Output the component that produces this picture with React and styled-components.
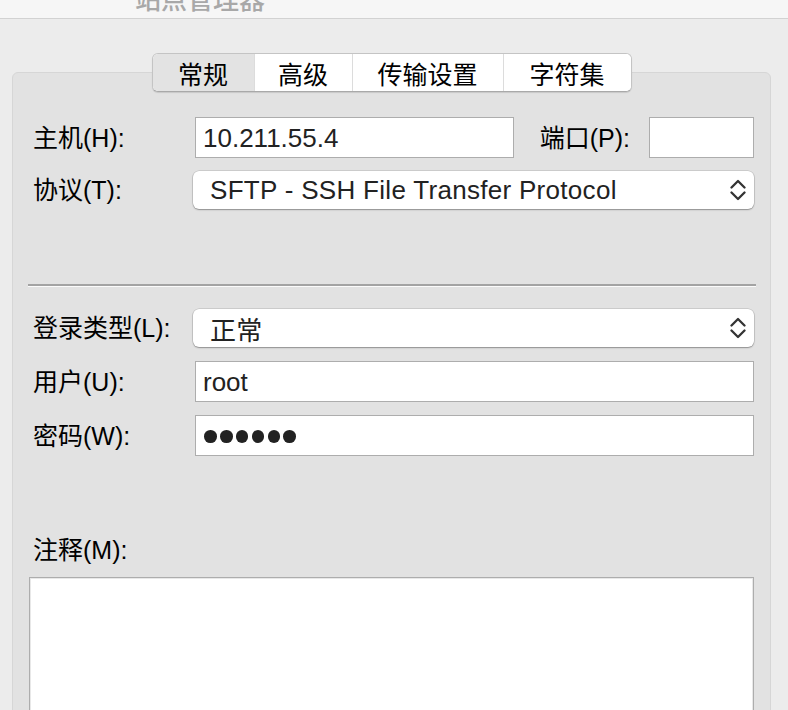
import React from "react";
import styled, { createGlobalStyle } from "styled-components";

const GlobalStyle = createGlobalStyle`
  html, body {
    margin: 0;
    padding: 0;
    background: #ececec;
  }
  body {
    font-family: "Liberation Sans", "Noto Sans CJK SC", sans-serif;
    -webkit-font-smoothing: antialiased;
  }
`;

const Window = styled.div`
  width: 788px;
  height: 710px;
  overflow: hidden;
  display: flex;
  flex-direction: column;
  background: #ececec;
`;

const TitleBar = styled.div`
  height: 18px;
  flex-shrink: 0;
  background: #f6f6f6;
  border-bottom: 1px solid #d2d2d2;
  overflow: hidden;
  padding-left: 135px;
`;

const Title = styled.div`
  margin-top: -15px;
  font-size: 26px;
  line-height: 26px;
  color: #a8a8a8;
  font-family: "Noto Sans CJK SC", sans-serif;
  font-weight: 500;
`;

const Body = styled.div`
  flex: 1;
  padding: 34px 17px 0 12px;
  display: flex;
  flex-direction: column;
`;

const TabRow = styled.div`
  display: flex;
  justify-content: center;
  margin-bottom: -20px;
  position: relative;
  z-index: 1;
`;

const Segmented = styled.div`
  display: flex;
  height: 39px;
  box-sizing: border-box;
  border-radius: 6px;
  background: #fff;
  border: 1px solid #c4c4c4;
  border-bottom-color: #a9a9a9;
  box-shadow: 0 1px 1px rgba(0, 0, 0, 0.12);
  overflow: hidden;
`;

const Tab = styled.div`
  display: flex;
  align-items: center;
  justify-content: center;
  width: ${(p) => p.w}px;
  box-sizing: border-box;
  font-size: 25px;
  color: #000;
  background: ${(p) => (p.active ? "#e3e3e3" : "#fff")};
  border-left: ${(p) => (p.first ? "none" : "1px solid #dcdcdc")};
`;

const Panel = styled.div`
  flex: 1;
  background: #e2e2e2;
  border: 1px solid #d6d6d6;
  border-radius: 6px 6px 0 0;
  padding: 44px 16px 0 20px;
  display: flex;
  flex-direction: column;
`;

const Row = styled.div`
  display: flex;
  align-items: center;
  margin-top: ${(p) => p.mt || 0}px;
`;

const Label = styled.div`
  width: ${(p) => (p.w ? p.w + "px" : "auto")};
  margin: ${(p) => p.m || 0};
  flex-shrink: 0;
  font-size: 25px;
  line-height: 30px;
  color: #000;
  white-space: nowrap;
`;

const Field = styled.div`
  flex: ${(p) => (p.w ? "none" : 1)};
  width: ${(p) => (p.w ? p.w + "px" : "auto")};
  height: 41px;
  box-sizing: border-box;
  margin-left: 2px;
  background: #fff;
  border: 1px solid #adadad;
  display: flex;
  align-items: center;
  padding: 2px 0 0 7px;
  font-size: 26px;
  color: #222;
`;

const Select = styled.div`
  flex: 1;
  height: 38px;
  box-sizing: border-box;
  background: #fff;
  border-radius: 6px;
  box-shadow: 0 0 0 0.5px rgba(0, 0, 0, 0.18), 0 1px 1.5px rgba(0, 0, 0, 0.3);
  display: flex;
  align-items: center;
  padding: 0 8px 0 17px;
  font-size: 26px;
  color: #222;
`;

const SelectText = styled.span`
  flex: 1;
  letter-spacing: 0.3px;
`;

const Separator = styled.div`
  height: 2px;
  background: #a3a3a3;
  border-bottom: 1px solid #fbfbfb;
  margin: 75px -2px 0 -5px;
`;

const Dots = styled.div`
  display: flex;
  gap: 3.2px;
  margin-left: 1px;
`;

const Dot = styled.span`
  width: 12.7px;
  height: 12.7px;
  border-radius: 50%;
  background: #222;
`;

const NoteLabel = styled(Label)`
  margin-top: 79px;
`;

const TextArea = styled.div`
  margin: 12px 0 0 -4px;
  height: 200px;
  background: #fff;
  border: 1px solid #adadad;
  box-shadow: inset 0 0 0 1px #e8e8e8;
`;

const Chevrons = () => (
  <svg width="16" height="24" viewBox="0 0 16 24" fill="none">
    <path
      d="M1.5 9.5 L8 3 L14.5 9.5 M1.5 14.5 L8 21 L14.5 14.5"
      stroke="#333"
      strokeWidth="2.3"
      strokeLinecap="round"
      strokeLinejoin="round"
    />
  </svg>
);

const tabs = [
  { label: "常规", w: 101 },
  { label: "高级", w: 98 },
  { label: "传输设置", w: 151 },
  { label: "字符集", w: 128 },
];

export default function App() {
  return (
    <>
      <GlobalStyle />
      <Window>
        <TitleBar>
          <Title>站点管理器</Title>
        </TitleBar>
        <Body>
          <TabRow>
            <Segmented>
              {tabs.map((t, i) => (
                <Tab key={t.label} w={t.w} active={i === 0} first={i === 0}>
                  {t.label}
                </Tab>
              ))}
            </Segmented>
          </TabRow>
          <Panel>
            <Row>
              <Label w={160}>主机(H):</Label>
              <Field>10.211.55.4</Field>
              <Label m="0 17px 0 26px">端口(P):</Label>
              <Field w={105} />
            </Row>
            <Row mt={13}>
              <Label w={160}>协议(T):</Label>
              <Select>
                <SelectText>SFTP - SSH File Transfer Protocol</SelectText>
                <Chevrons />
              </Select>
            </Row>
            <Separator />
            <Row mt={22}>
              <Label w={160}>登录类型(L):</Label>
              <Select>
                <SelectText>正常</SelectText>
                <Chevrons />
              </Select>
            </Row>
            <Row mt={14}>
              <Label w={160}>用户(U):</Label>
              <Field>root</Field>
            </Row>
            <Row mt={13}>
              <Label w={160}>密码(W):</Label>
              <Field>
                <Dots>
                  {Array.from({ length: 6 }).map((_, i) => (
                    <Dot key={i} />
                  ))}
                </Dots>
              </Field>
            </Row>
            <NoteLabel>注释(M):</NoteLabel>
            <TextArea />
          </Panel>
        </Body>
      </Window>
    </>
  );
}
